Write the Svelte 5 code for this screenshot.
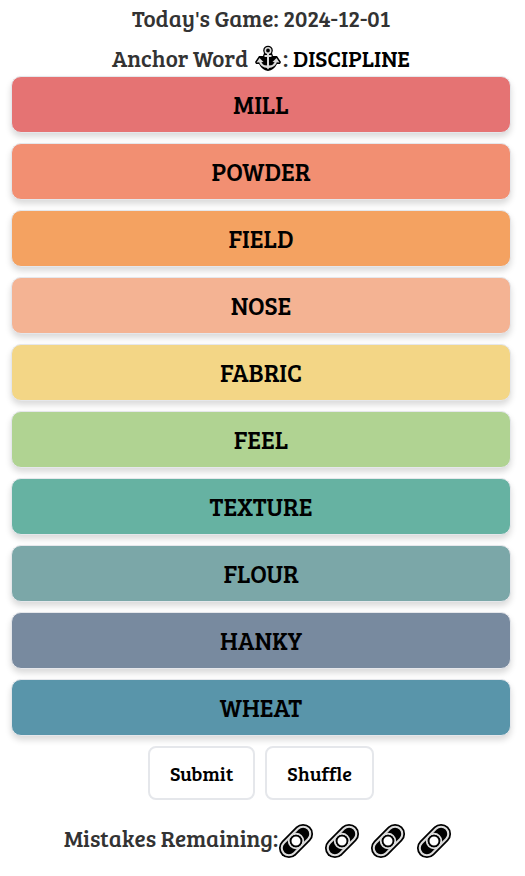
<script lang="ts">
  const gameDate = '2024-12-01';
  const anchorWord = 'DISCIPLINE';

  let tiles = $state([
    { word: 'MILL', color: '#e57373' },
    { word: 'POWDER', color: '#f28f72' },
    { word: 'FIELD', color: '#f4a261' },
    { word: 'NOSE', color: '#f4b393' },
    { word: 'FABRIC', color: '#f3d686' },
    { word: 'FEEL', color: '#b0d392' },
    { word: 'TEXTURE', color: '#66b2a2' },
    { word: 'FLOUR', color: '#7ba7a8' },
    { word: 'HANKY', color: '#788a9f' },
    { word: 'WHEAT', color: '#5995aa' }
  ]);
  let mistakes = $state(4);

  // colours stay in place, only the words move
  function shuffle() {
    const words = tiles.map((t) => t.word).sort(() => Math.random() - 0.5);
    tiles = tiles.map((t, i) => ({ ...t, word: words[i] }));
  }
</script>

<main>
  <h2>Today's Game: {gameDate}</h2>
  <h2 class="anchor">
    <span>Anchor Word</span>
    <svg width="26" height="26" viewBox="0 0 26 26" fill="none" aria-hidden="true">
      <circle cx="13" cy="5.500" r="4.800" fill="#000" />
      <path
        d="M9 8h8l1 3h4l4 6-1 2-3 0q-3 6-9 7-6-1-9-7l-3 0-1-2 4-6h4z"
        fill="#000"
      />
      <circle cx="13" cy="5.500" r="2.700" stroke="#ddd" stroke-width="1.600" />
      <path
        d="M13 8v14M9.500 11h7M4.500 15c1 4.500 4 7 8.500 7s7.500-2.500 8.500-7"
        stroke="#ddd"
        stroke-width="2"
      />
      <path d="M1.500 17.500l3-4.500 4 4zM24.500 17.500l-3-4.500-4 4zM10 20.500h6l-3 4z" fill="#ddd" />
    </svg>
    <span>: <strong>{anchorWord}</strong></span>
  </h2>

  <div class="tiles">
    {#each tiles as tile}
      <button class="tile" style="background-color: {tile.color}">{tile.word}</button>
    {/each}
  </div>

  <div class="actions">
    <button>Submit</button>
    <button onclick={shuffle}>Shuffle</button>
  </div>

  <div class="mistakes">
    <span>Mistakes Remaining:</span>
    <div class="links">
      {#each Array(mistakes) as _}
        <svg width="36" height="36" viewBox="0 0 36 36" fill="none" aria-hidden="true">
          <g transform="rotate(-45 18 18)">
            <rect x="-2" y="8" width="40" height="20" rx="10" fill="#000" />
            <rect x="0.800" y="10.800" width="34.400" height="14.400" rx="7.200" stroke="#ddd" stroke-width="2.100" />
            <circle cx="18" cy="18" r="7.200" stroke="#ddd" stroke-width="2" />
            <circle cx="18" cy="18" r="5.400" fill="#fff" stroke="#000" stroke-width="1.800" />
          </g>
        </svg>
      {/each}
    </div>
  </div>
</main>

<style>
  :global(body) {
    background: #fff;
  }
  main {
    display: flex;
    flex-direction: column;
    padding: 0 14px 0 11px;
    color: #333;
    font-family: 'Bree Serif', 'DejaVu Serif Condensed', 'DejaVu Serif', serif;
    font-size: 23px;
  }
  h2 {
    margin: 0;
    font-size: 23px;
    font-weight: 400;
    line-height: 36px;
  }
  h2:first-child {
    margin-bottom: 4px;
    text-align: center;
  }
  .anchor {
    display: flex;
    align-items: center;
    justify-content: center;
  }
  .anchor svg {
    margin: 0 2px 0 7px;
  }
  strong {
    color: #000;
    font-weight: 400;
  }
  button {
    color: #000;
    font-family: inherit;
    cursor: pointer;
  }
  .tiles {
    display: grid;
    gap: 10px;
  }
  .tile {
    height: 57px;
    padding: 0 6px 2px;
    border: 1px solid #e5e7eb;
    border-radius: 10px;
    box-shadow: 0 4px 6px rgba(0, 0, 0, 0.15);
    font-size: 25px;
  }
  .actions {
    display: flex;
    justify-content: center;
    gap: 10px;
    margin: 10px 0;
  }
  .actions button {
    height: 54px;
    padding: 0 20px;
    border: 2px solid #e5e7eb;
    border-radius: 8px;
    background: #fff;
    font-size: 20px;
  }
  .mistakes {
    display: flex;
    align-items: center;
    justify-content: center;
    height: 62px;
  }
  .mistakes span {
    padding-bottom: 8px;
  }
  .links {
    display: flex;
    gap: 10px;
    padding: 0 6px 0 0;
  }
</style>
